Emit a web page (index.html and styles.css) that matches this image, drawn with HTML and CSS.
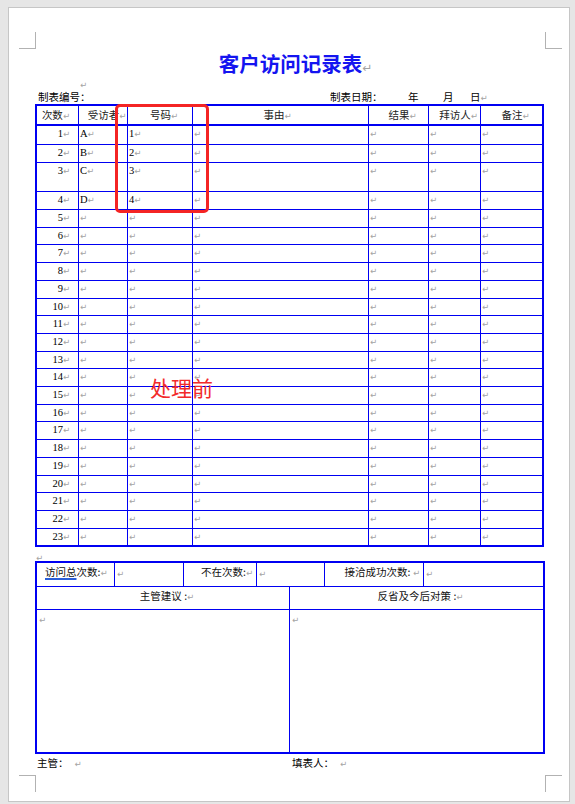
FILE: index.html
```html
<!DOCTYPE html>
<html lang="zh-CN">
<head>
<meta charset="utf-8">
<title>客户访问记录表</title>
<link rel="stylesheet" href="styles.css">
</head>
<body>
<div class="page">
  <span class="crop tl"></span>
  <span class="crop tr"></span>
  <span class="crop bl"></span>
  <span class="crop br"></span>

  <h1 class="title">客户访问记录表<span class="mk mk-title">↵</span></h1>
  <div class="blank"><span class="mk">↵</span></div>
  <div class="meta">
    <span class="meta-left">制表编号：</span>
    <span class="d-label">制表日期：</span>
    <span class="d-y">年</span>
    <span class="d-m">月</span>
    <span class="d-d">日<span class="mk">↵</span></span>
  </div>

  <table class="log">
    <thead>
      <tr>
        <th class="w1 num">次数</th>
        <th class="w2">受访者</th>
        <th class="w3">号码</th>
        <th class="w4 sy">事由</th>
        <th class="w5">结果</th>
        <th class="w6">拜访人</th>
        <th class="w7">备注</th>
      </tr>
    </thead>
    <tbody>
      <tr class="h19"><td class="num">1</td><td>A</td><td>1</td><td></td><td></td><td></td><td></td></tr>
      <tr><td class="num">2</td><td>B</td><td>2</td><td></td><td></td><td></td><td></td></tr>
      <tr class="h29"><td class="num">3</td><td>C</td><td>3</td><td></td><td></td><td></td><td></td></tr>
      <tr><td class="num">4</td><td>D</td><td>4</td><td></td><td></td><td></td><td></td></tr>
      <tr><td class="num">5</td><td></td><td></td><td></td><td></td><td></td><td></td></tr>
      <tr class="h17"><td class="num">6</td><td></td><td></td><td></td><td></td><td></td><td></td></tr>
      <tr><td class="num">7</td><td></td><td></td><td></td><td></td><td></td><td></td></tr>
      <tr><td class="num">8</td><td></td><td></td><td></td><td></td><td></td><td></td></tr>
      <tr><td class="num">9</td><td></td><td></td><td></td><td></td><td></td><td></td></tr>
      <tr class="h17"><td class="num">10</td><td></td><td></td><td></td><td></td><td></td><td></td></tr>
      <tr><td class="num">11</td><td></td><td></td><td></td><td></td><td></td><td></td></tr>
      <tr><td class="num">12</td><td></td><td></td><td></td><td></td><td></td><td></td></tr>
      <tr class="h17"><td class="num">13</td><td></td><td></td><td></td><td></td><td></td><td></td></tr>
      <tr><td class="num">14</td><td></td><td></td><td></td><td></td><td></td><td></td></tr>
      <tr><td class="num">15</td><td></td><td></td><td></td><td></td><td></td><td></td></tr>
      <tr class="h17"><td class="num">16</td><td></td><td></td><td></td><td></td><td></td><td></td></tr>
      <tr><td class="num">17</td><td></td><td></td><td></td><td></td><td></td><td></td></tr>
      <tr><td class="num">18</td><td></td><td></td><td></td><td></td><td></td><td></td></tr>
      <tr><td class="num">19</td><td></td><td></td><td></td><td></td><td></td><td></td></tr>
      <tr class="h17"><td class="num">20</td><td></td><td></td><td></td><td></td><td></td><td></td></tr>
      <tr><td class="num">21</td><td></td><td></td><td></td><td></td><td></td><td></td></tr>
      <tr><td class="num">22</td><td></td><td></td><td></td><td></td><td></td><td></td></tr>
      <tr class="h16"><td class="num">23</td><td></td><td></td><td></td><td></td><td></td><td></td></tr>
    </tbody>
  </table>

  <div class="blank blank-left"><span class="mk">↵</span></div>

  <div class="sum">
    <div class="c ra c-total"><span class="ul">访问总</span>次数:</div>
    <div class="c"></div>
    <div class="c ra c-absent">不在次数:</div>
    <div class="c span2"></div>
    <div class="c ra c-absent">接洽成功次数: </div>
    <div class="c last"></div>

    <div class="c ctr span4">主管建议 :</div>
    <div class="c ctr span3 last">反省及今后对策 :</div>

    <div class="c span4 nob"></div>
    <div class="c span3 last nob"></div>
  </div>

  <div class="foot">
    <span class="foot-left">主管：<span class="mk mk-gap">↵</span></span>
    <span>填表人：<span class="mk mk-gap">↵</span></span>
  </div>

  <div class="redbox"></div>
  <div class="note">处理前</div>
</div>
</body>
</html>
```

FILE: styles.css
```css
* {
  box-sizing: border-box;
}

html,
body {
  margin: 0;
  padding: 0;
}

body {
  background: #e6e6e6;
  font-family: "Noto Sans CJK SC", "Liberation Sans", sans-serif;
  color: #111;
  width: 575px;
  height: 804px;
  overflow: hidden;
}

.page {
  position: relative;
  margin: 7px 0 0 8px;
  width: 562px;
  height: 795px;
  background: #fff;
  border: 1px solid #c6c6c6;
  padding: 42px 24px 0 26px;
}

/* crop marks */
.crop {
  position: absolute;
  width: 17px;
  height: 17px;
  border: 0 solid #b2b2b2;
}
.crop.tl { left: 10px; top: 24px; border-right-width: 1px; border-bottom-width: 1px; }
.crop.tr { left: 536px; top: 24px; border-left-width: 1px; border-bottom-width: 1px; }
.crop.bl { left: 10px; top: 767px; border-right-width: 1px; border-top-width: 1px; }
.crop.br { left: 536px; top: 767px; border-left-width: 1px; border-top-width: 1px; }

/* paragraph marks */
.mk,
.log th::after,
.log td::after,
.sum .c::after {
  font-family: "DejaVu Sans", sans-serif;
  font-size: 8.5px;
  color: #a3a3a3;
  font-weight: normal;
}

.log th::after,
.log td::after,
.sum .c::after {
  content: "↵";
}

.title {
  margin: 0;
  height: 26px;
  line-height: 26px;
  text-align: center;
  font-size: 20.5px;
  font-weight: 700;
  color: #1414f0;
  letter-spacing: 0;
}

.mk-title {
  font-size: 12px;
  margin-right: -11px;
}

.blank {
  height: 14px;
  line-height: 10px;
  padding-left: 45px;
}

.blank-left {
  padding-left: 1px;
  padding-top: 2px;
}

.meta {
  display: flex;
  height: 14px;
  line-height: 14px;
  font-size: 10.5px;
  padding-left: 3px;
  color: #000;
}

.meta-left { width: 292px; }
.d-label { width: 78px; }
.d-y { width: 35px; }
.d-m { width: 27px; }

/* main log table */
.log {
  border-collapse: separate;
  border-spacing: 0;
  table-layout: fixed;
  width: 509px;
  border: 2px solid #0000f2;
  font-size: 10.5px;
}

.log th,
.log td {
  padding: 0 1px;
  border-right: 1px solid #0000f2;
  border-bottom: 1px solid #0000f2;
  vertical-align: top;
  line-height: 15px;
  white-space: nowrap;
  overflow: hidden;
  text-align: left;
}

.log th:last-child,
.log td:last-child {
  border-right: 0;
}

.log tbody tr:last-child td {
  border-bottom: 0;
}

.log thead tr { height: 19px; }

.log th {
  font-weight: normal;
  text-align: center;
  border-bottom-width: 2px;
  padding-top: 1px;
  color: #222;
}

.log th::after {
  margin-right: -8px;
}

.log th.sy {
  padding-right: 15px;
}

.log td {
  font-family: "Liberation Serif", "Noto Sans CJK SC", serif;
  color: #000;
}

.log .num,
.log th.num {
  text-align: right;
  padding-right: 8px;
}

.log th.num::after {
  margin-right: 0;
}

.w1 { width: 42px; }
.w2 { width: 49px; }
.w3 { width: 65px; }
.w4 { width: 176px; }
.w5 { width: 60px; }
.w6 { width: 52px; }
.w7 { width: 61px; }

.log tbody tr { height: 18px; }
.log tbody tr.h19 { height: 19px; }
.log tbody tr.h29 { height: 29px; }
.log tbody tr.h17 { height: 17px; }
.log tbody tr.h16 { height: 16px; }

/* summary box */
.sum {
  display: grid;
  width: 510px;
  grid-template-columns: 78px 69px 73px 33px 35px 99px 119px;
  grid-template-rows: 24px 23px 142px;
  border: 2px solid #0000f2;
  font-size: 10.5px;
  line-height: 15px;
  color: #111;
}

.sum .c {
  border-right: 1px solid #0000f2;
  border-bottom: 1px solid #0000f2;
  padding: 2px 2px 0;
  white-space: nowrap;
  overflow: hidden;
}

.sum .ra {
  text-align: right;
  padding-right: 3px;
  padding-top: 1px;
}

.sum .c-total {
  text-align: left;
  padding-left: 8px;
  padding-right: 0;
}

.sum .ctr {
  text-align: center;
  padding-top: 1px;
}

.sum .ctr::after {
  margin-right: -8px;
}

.sum .span2 { grid-column: span 2; }
.sum .span3 { grid-column: span 3; }
.sum .span4 { grid-column: span 4; }
.sum .last { border-right: 0; }
.sum .nob { border-bottom: 0; padding-top: 1px; }

.ul {
  text-decoration: underline;
  text-decoration-color: #2a5fd8;
  text-decoration-thickness: 2px;
  text-underline-offset: 2px;
}

/* footer */
.foot {
  display: flex;
  height: 17px;
  line-height: 17px;
  font-size: 10.5px;
  padding-left: 2px;
  color: #000;
}

.foot-left {
  width: 255px;
}

.mk-gap {
  margin-left: 6px;
}

/* annotation overlays */
.redbox {
  position: absolute;
  left: 106px;
  top: 96px;
  width: 94px;
  height: 109px;
  border: 3px solid #f42424;
  border-radius: 5px;
}

.note {
  position: absolute;
  left: 141px;
  top: 367px;
  font-size: 21px;
  line-height: 24px;
  color: #f22a2a;
}
```
